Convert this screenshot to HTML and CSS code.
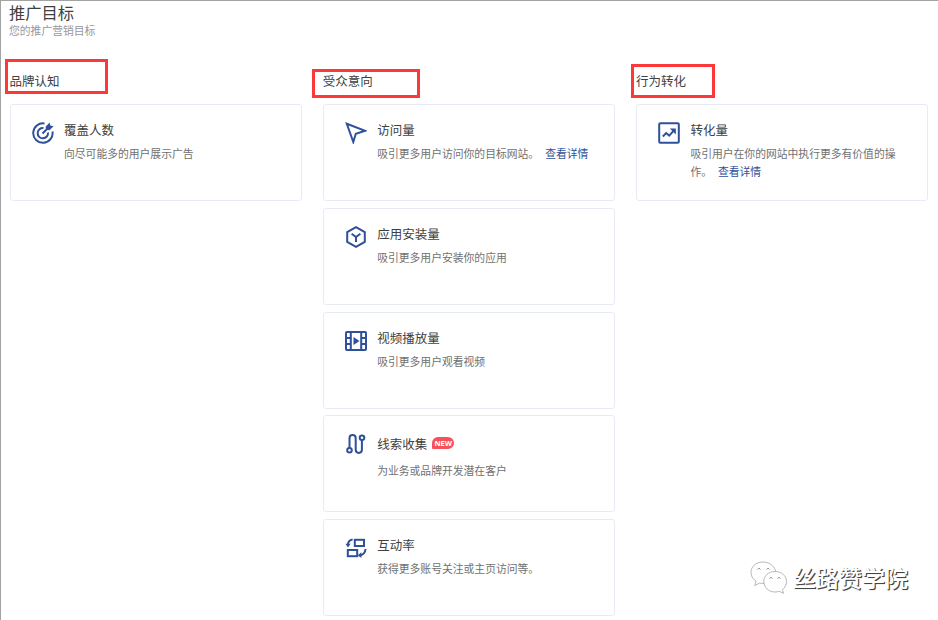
FILE: index.html
```
<!DOCTYPE html>
<html lang="zh">

<head>
  <meta charset="UTF-8">
  <title>推广目标</title>
  <link rel="stylesheet" href="styles.css">
</head>

<body>
  <div class="page">
    <header class="page-header">
      <h1>推广目标</h1>
      <p>您的推广营销目标</p>
    </header>

    <div class="columns">
      <!-- 品牌认知 -->
      <section class="column">
        <h2 class="column-title mark-brand">品牌认知</h2>
        <div class="card">
          <svg class="icon" viewBox="0 0 22 22">
            <path d="M12.500 1.500A9.700 9.700 0 1 0 20.500 9.500" />
            <path d="M11.500 6A5.200 5.200 0 1 0 16 10.500" />
            <path d="M10.500 11.500L16 6" />
            <path class="fill" d="M13.600 4.800L17.600.6l.7 2.900 3.200.7-4 4-3.400-.5z" />
          </svg>
          <div class="card-body">
            <h3>覆盖人数</h3>
            <p>向尽可能多的用户展示广告</p>
          </div>
        </div>
      </section>

      <!-- 受众意向 -->
      <section class="column">
        <h2 class="column-title mark-intent">受众意向</h2>
        <div class="card">
          <svg class="icon" viewBox="0 0 22 22">
            <path d="M1.800 1.800L20.200 8.800 10.800 11.800 8.300 20z" />
          </svg>
          <div class="card-body">
            <h3>访问量</h3>
            <p>吸引更多用户访问你的目标网站。<a href="#">查看详情</a></p>
          </div>
        </div>
        <div class="card">
          <svg class="icon" viewBox="0 0 22 22">
            <path d="M11 1.200L19.800 6v10L11 20.800 2.200 16V6z" />
            <path d="M6.600 7.800L11 11l4.400-3.200M11 11v5" />
          </svg>
          <div class="card-body">
            <h3>应用安装量</h3>
            <p>吸引更多用户安装你的应用</p>
          </div>
        </div>
        <div class="card">
          <svg class="icon" viewBox="0 0 22 22">
            <rect x="1" y="2" width="20" height="18" rx="1" />
            <path d="M5.800 2v18M16.200 2v18M1 8h4.800M1 14h4.800M16.200 8H21M16.200 14H21" />
            <path class="fill" d="M8.500 7L14.500 11l-6 4z" />
          </svg>
          <div class="card-body">
            <h3>视频播放量</h3>
            <p>吸引更多用户观看视频</p>
          </div>
        </div>
        <div class="card card-new">
          <svg class="icon" viewBox="0 0 22 22">
            <circle cx="4.500" cy="17.300" r="2.300" />
            <circle cx="17" cy="4.700" r="2.300" />
            <path d="M4.500 15V5.200a3.100 3.100 0 0 1 6.200 0v11.600a3.100 3.100 0 0 0 6.200 0V7" />
          </svg>
          <div class="card-body">
            <h3>线索收集<span class="badge">NEW</span></h3>
            <p>为业务或品牌开发潜在客户</p>
          </div>
        </div>
        <div class="card">
          <svg class="icon" viewBox="0 0 22 22">
            <rect x="9.800" y="2.800" width="9.200" height="6.200" />
            <rect x="2.800" y="13" width="9.400" height="6.200" />
            <path d="M7.600 2.600C4.500 3 3 4.600 2.900 8.200M14.200 18.400c3.800-.3 6-2.400 6.300-6.400" />
            <path class="fill" d="M.4 6.800h5.200L3 10.400zM16.400 15.300v5.800L12.800 18.300z" />
          </svg>
          <div class="card-body">
            <h3>互动率</h3>
            <p>获得更多账号关注或主页访问等。</p>
          </div>
        </div>
      </section>

      <!-- 行为转化 -->
      <section class="column">
        <h2 class="column-title mark-action">行为转化</h2>
        <div class="card">
          <svg class="icon" viewBox="0 0 22 22">
            <rect x="1.200" y="1.200" width="19.600" height="19.600" rx="1" />
            <path d="M4.800 14.500L8.200 11l3 2.600 4.800-5.200" />
            <path class="fill" d="M11.800 6.600h6v6z" />
          </svg>
          <div class="card-body">
            <h3>转化量</h3>
            <p>吸引用户在你的网站中执行更多有价值的操作。<a href="#">查看详情</a></p>
          </div>
        </div>
      </section>
    </div>
  </div>

  <!-- 公众号水印 -->
  <div class="watermark">
    <svg viewBox="0 0 38 34">
      <path d="M13 1C5.500 1 1 5.800 1 11.500c0 3.700 2 6.600 5 8.700L4.700 24.500l5-2.500c1.300.3 2.700.5 4.300.5C25 22 26 14 25.500 9.500 23.500 4 18.500 1 13 1z" />
      <path d="M25 10.500c-6.500 0-11.200 4.300-11.200 10S18.500 31 25 31c1.700 0 3-.3 4.300-.7l4.200 2-1-3.700c2.500-2 4-4.700 4-8.100 0-5.700-5-10-11.500-10z" />
      <path class="eyes" d="M7.500 8.500q1.500-2.800 3 0M16.500 8.500q1.500-2.800 3 0M19.500 17.500q1.500-2.500 3 0M27.500 17.500q1.500-2.500 3 0" />
    </svg>
    <span>丝路赞学院</span>
  </div>
</body>

</html>
```
FILE: styles.css
```
* {
  box-sizing: border-box;
}

body {
  margin: 0;
  background: #fff;
  font-family: 'Noto Sans CJK SC', sans-serif;
  color: #404040;
}

h1,
h2,
h3,
p {
  margin: 0;
  font-weight: 400;
}

.page {
  height: 620px;
  overflow: hidden;
  border-top: 1px solid #a3a3a3;
  border-left: 1px solid #a3a3a3;
}

.page-header {
  height: 70px;
  padding: 1px 0 0 8px;
}

.page-header h1 {
  font-size: 16.3px;
  line-height: 20px;
}

.page-header p {
  font-size: 10.8px;
  line-height: 16px;
  color: #999;
}

.columns {
  display: grid;
  grid-template-columns: repeat(3, 292px);
  column-gap: 21.2px;
  padding-left: 9px;
}

.column {
  display: flex;
  flex-direction: column;
  gap: 6.8px;
}

.column-title {
  position: relative;
  height: 26.2px;
  font-size: 12.5px;
  line-height: 19px;
  text-indent: -0.5px;
}

/* 红色标注框 */
.column-title::after {
  content: '';
  position: absolute;
  box-sizing: border-box;
  border: 3px solid #fd3838;
}

.mark-brand::after {
  top: -12px;
  left: -5px;
  width: 103px;
  height: 35px;
}

.mark-intent::after {
  top: -2px;
  left: -11.2px;
  width: 108px;
  height: 29px;
}

.mark-action::after {
  top: -7px;
  left: -5.4px;
  width: 84px;
  height: 34px;
}

.card {
  display: flex;
  gap: 10px;
  height: 97px;
  padding: 17px 20px 0 21px;
  border: 1px solid #e9ebf4;
  border-radius: 3px;
}

.icon {
  flex: none;
  width: 22px;
  height: 22px;
  fill: none;
  stroke: #2f5199;
  stroke-width: 2;
}

.icon .fill {
  fill: #2f5199;
  stroke: none;
}

.card-body {
  margin-top: -1px;
}

.card-body h3 {
  display: flex;
  align-items: center;
  font-size: 12.5px;
  line-height: 18px;
}

.card-body p {
  margin-top: 5px;
  font-size: 10.8px;
  line-height: 18px;
  color: #707070;
}

.card-body a {
  margin-left: 6px;
  color: #2f5199;
  text-decoration: none;
}

.card-new h3 {
  margin-top: 3px;
}

.card-new p {
  margin-top: 8px;
}

.badge {
  margin: -2px 0 0 5px;
  width: 22px;
  height: 12px;
  border-radius: 6px 6px 6px 1px;
  background: #f6525a;
  color: #fff;
  font: bold 7.5px/12px 'Open Sans', sans-serif;
  text-align: center;
  text-indent: 0;
}

.watermark {
  position: absolute;
  top: 561px;
  left: 750px;
  display: flex;
  align-items: center;
  gap: 5px;
}

.watermark svg {
  width: 38px;
  height: 34px;
  fill: #fff;
  stroke: #999;
  stroke-width: 0.7;
}

.watermark .eyes {
  stroke: #666;
}

.watermark span {
  margin-top: -2px;
  font-size: 23px;
  font-weight: 500;
  line-height: 34px;
  color: #fff;
  text-shadow: 1px 1px 0 #444, 1px 1px 1px #777;
}
```
